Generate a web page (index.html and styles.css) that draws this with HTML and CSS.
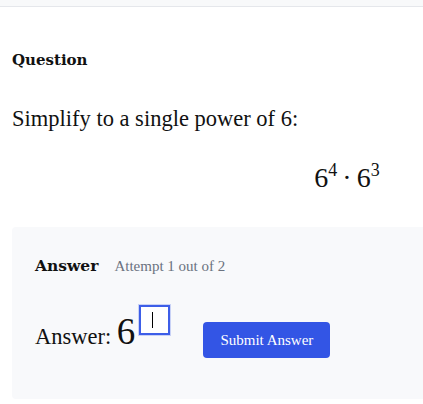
FILE: index.html
```html
<!DOCTYPE html>
<html lang="en">
<head>
    <meta charset="UTF-8">
    <meta name="viewport" content="width=device-width, initial-scale=1.0">
    <title>Question</title>
    <link rel="stylesheet" href="styles.css">
</head>
<body>
    <div class="topbar"></div>

    <div class="page">
        <h2 class="section-label">Question</h2>
        <p class="prompt">Simplify to a single power of 6:</p>
        <div class="math">6<sup>4</sup><span class="dot">&middot;</span>6<sup>3</sup></div>

        <!-- Answer area -->
        <div class="answer-box">
            <div class="answer-head">
                <span class="answer-title">Answer</span>
                <span class="attempts">Attempt 1 out of 2</span>
            </div>
            <div class="answer-row">
                <div class="expr">Answer: <span class="base">6</span><span class="exp-input"><span class="caret"></span></span></div>
                <button class="submit-btn">Submit Answer</button>
            </div>
        </div>
    </div>
</body>
</html>
```

FILE: styles.css
```css
html {
    overflow: hidden;
}
body {
    font-family: Georgia, 'Liberation Serif', 'DejaVu Serif', serif;
    margin: 0;
    padding: 0;
    background-color: #fff;
    color: #111;
}
.topbar {
    height: 6px;
    background-color: #f8f9fa;
    border-bottom: 1px solid #e5e7eb;
}
.page {
    width: 668px;
    padding: 0 12px;
}
.section-label {
    font-family: 'DejaVu Serif', serif;
    font-size: 15px;
    font-weight: 700;
    line-height: 20px;
    margin: 43px 0 0;
}
.prompt {
    font-size: 22.5px;
    line-height: 28px;
    margin: 35px 0 0;
}
.math {
    font-family: 'Liberation Serif', serif;
    font-size: 28px;
    line-height: 34px;
    text-align: center;
    margin-top: 28px;
    padding-left: 2px;
}
.math sup {
    font-size: 18px;
    vertical-align: 11px;
    line-height: 0;
}
.dot {
    margin: 0 5px;
}
.answer-box {
    background: #f8f9fb;
    border-radius: 4px;
    margin-top: 32px;
    padding: 28px 23px 41px;
}
.answer-head {
    line-height: 22px;
}
.answer-title {
    font-family: 'DejaVu Serif', serif;
    font-size: 15.5px;
    font-weight: 700;
}
.attempts {
    font-size: 15px;
    color: #6b7280;
    margin-left: 12px;
}
.answer-row {
    display: flex;
    align-items: center;
    margin-top: 27px;
}
.expr {
    font-size: 22.5px;
    line-height: 40px;
}
.base {
    font-family: 'Liberation Serif', serif;
    font-size: 37px;
}
.exp-input {
    display: inline-block;
    overflow: hidden;
    position: relative;
    width: 27px;
    height: 26px;
    margin-left: 4px;
    background: #fff;
    border: 2px solid #3d5ee8;
    box-shadow: 0 0 0 1px rgba(61, 94, 232, 0.25);
    vertical-align: 9px;
}
.caret {
    position: absolute;
    left: 11px;
    top: 5px;
    width: 1px;
    height: 16px;
    background: #000;
}
.submit-btn {
    font-family: inherit;
    font-size: 15px;
    color: #fff;
    background-color: #3355e5;
    border: none;
    border-radius: 4px;
    width: 127px;
    height: 36px;
    margin-left: 33px;
    margin-top: 18px;
    cursor: pointer;
}
```
